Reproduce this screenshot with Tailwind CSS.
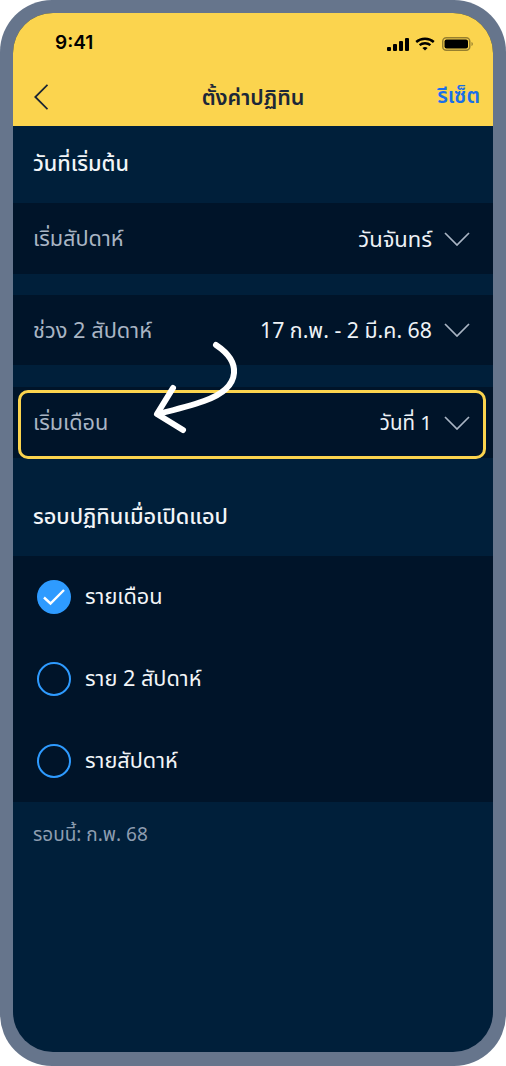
<!DOCTYPE html>
<html lang="th">
<head>
  <meta charset="UTF-8" />
  <meta name="viewport" content="width=device-width, initial-scale=1.0" />
  <title>ตั้งค่าปฏิทิน</title>
  <script src="https://cdn.jsdelivr.net/npm/@tailwindcss/browser@4"></script>
</head>
<body class="bg-white font-['Noto_Sans','Noto_Sans_Thai','DejaVu_Sans',sans-serif]">
  <!-- phone frame -->
  <div class="relative w-[506px] h-[1066px] bg-[#66758c] rounded-[52px] p-[13px] pb-[14px]">
    <div class="h-full rounded-[40px] overflow-hidden bg-[#001f3a] flex flex-col">

      <!-- yellow header -->
      <div class="h-[113px] bg-[#fbd44e] shrink-0 flex flex-col">
        <div class="h-[59px] flex items-end justify-between pl-[42px] pr-[20px] pb-[18px]">
          <span class="font-['Inter',sans-serif] text-[19px] leading-[22px] font-semibold text-black">9:41</span>
          <div class="flex items-center gap-[6px] mb-[3px]">
            <svg width="22" height="13" viewBox="0 0 22 13" fill="#000"><rect x="0" y="9" width="4" height="4" rx="1"/><rect x="6" y="6" width="4" height="7" rx="1"/><rect x="12" y="3" width="4" height="10" rx="1"/><rect x="18" y="0" width="4" height="13" rx="1"/></svg>
            <svg width="20" height="14" viewBox="0 0 20 14" fill="none" stroke="#000" stroke-width="2.4"><path d="M1.2 5C6 .6 14 .6 18.8 5"/><path d="M4.6 8.2c3-2.6 7.8-2.6 10.8 0"/><path d="M10 13.6 7.4 11c1.5-1.2 3.7-1.2 5.2 0z" fill="#000" stroke="none"/></svg>
            <svg width="31" height="14" viewBox="0 0 31 14" class="ml-[1px]"><rect x="0.75" y="0.75" width="27" height="12.5" rx="3.5" fill="none" stroke="#000" stroke-opacity="0.4" stroke-width="1.5"/><rect x="2.5" y="2.5" width="23.5" height="9" rx="2" fill="#000"/><path d="M29.5 5v4c.8-.3 1.3-1.1 1.3-2s-.5-1.700-1.300-2z" fill="#000" fill-opacity="0.4"/></svg>
          </div>
        </div>
        <div class="relative flex-1 flex items-center justify-center pb-[5px]">
          <svg class="absolute left-[21px] top-[12px]" width="14" height="26" viewBox="0 0 14 26" fill="none" stroke="#1a2433" stroke-width="1.8"><path d="M13.500 .8 1.300 13l12.200 12.200"/></svg>
          <span class="text-[21.5px] leading-[30px] font-semibold text-[#1c2738]">ตั้งค่าปฏิทิน</span>
          <span class="absolute right-[13px] top-[8px] text-[21px] leading-[30px] font-semibold text-[#1a6fe8]">รีเซ็ต</span>
        </div>
      </div>

      <!-- วันที่เริ่มต้น -->
      <div class="h-[77px] shrink-0 flex items-center pl-[20px] pb-[3px]">
        <span class="text-[21.7px] leading-[30px] font-medium text-[#f2f5f8]">วันที่เริ่มต้น</span>
      </div>

      <div class="h-[71px] shrink-0 bg-[#001429] flex items-center justify-between pl-[20px] pr-[23px]">
        <span class="text-[21.7px] leading-[30px] pb-[2px] text-[#a9b5c4]">เริ่มสัปดาห์</span>
        <div class="flex items-center gap-[12px]">
          <span class="text-[22px] leading-[30px] pb-[2px] text-[#eef2f6]">วันจันทร์</span>
          <svg width="26" height="14" viewBox="0 0 26 14" fill="none" stroke="#a9b5c4" stroke-width="1.700"><path d="M1 1l12 12L25 1"/></svg>
        </div>
      </div>

      <div class="h-[21px] shrink-0"></div>

      <div class="h-[70px] shrink-0 bg-[#001429] flex items-center justify-between pl-[20px] pr-[23px]">
        <span class="text-[21.8px] leading-[30px] text-[#a9b5c4]">ช่วง 2 สัปดาห์</span>
        <div class="flex items-center gap-[12px]">
          <span class="text-[21.3px] leading-[30px] text-[#eef2f6]">17 ก.พ. - 2 มี.ค. 68</span>
          <svg width="26" height="14" viewBox="0 0 26 14" fill="none" stroke="#a9b5c4" stroke-width="1.700"><path d="M1 1l12 12L25 1"/></svg>
        </div>
      </div>

      <div class="h-[22px] shrink-0"></div>

      <div class="h-[71px] shrink-0 bg-[#001429] flex items-center justify-between pl-[20px] pr-[23px]">
        <span class="text-[21.7px] leading-[30px] pb-[2px] text-[#a9b5c4]">เริ่มเดือน</span>
        <div class="flex items-center gap-[12px]">
          <span class="text-[20.5px] leading-[30px] pb-[2px] text-[#eef2f6]">วันที่ 1</span>
          <svg width="26" height="14" viewBox="0 0 26 14" fill="none" stroke="#a9b5c4" stroke-width="1.700"><path d="M1 1l12 12L25 1"/></svg>
        </div>
      </div>

      <!-- รอบปฏิทินเมื่อเปิดแอป -->
      <div class="h-[98px] shrink-0 flex items-center pl-[20px] pt-[18px]">
        <span class="text-[21.7px] leading-[30px] font-medium text-[#f2f5f8]">รอบปฏิทินเมื่อเปิดแอป</span>
      </div>

      <div class="h-[246px] shrink-0 bg-[#001429] flex flex-col">
        <div class="h-[82px] flex items-center gap-[14px] pl-[24px]">
          <svg width="34" height="34" viewBox="0 0 34 34"><circle cx="17" cy="17" r="17" fill="#2e9bff"/><path d="M7 17.500l6.500 6L27 10" fill="none" stroke="#fff" stroke-width="2.400"/></svg>
          <span class="text-[21.7px] leading-[30px] pb-[3px] text-[#f2f5f8]">รายเดือน</span>
        </div>
        <div class="h-[82px] flex items-center gap-[14px] pl-[24px]">
          <div class="w-[34px] h-[34px] rounded-full border-[2.5px] border-[#2e9bff]"></div>
          <span class="text-[21.7px] leading-[30px] pb-[3px] text-[#f2f5f8]">ราย 2 สัปดาห์</span>
        </div>
        <div class="h-[82px] flex items-center gap-[14px] pl-[24px]">
          <div class="w-[34px] h-[34px] rounded-full border-[2.5px] border-[#2e9bff]"></div>
          <span class="text-[21.7px] leading-[30px] pb-[3px] text-[#f2f5f8]">รายสัปดาห์</span>
        </div>
      </div>

      <div class="pl-[20px] pt-[18px]">
        <span class="text-[19px] leading-[28px] text-[#8d9db0]">รอบนี้: ก.พ. 68</span>
      </div>
    </div>

    <!-- highlight over the third row -->
    <div class="absolute left-[18px] top-[390px] w-[468px] h-[69px] rounded-[10px] border-[3.5px] border-[#fbd44e]"></div>

    <!-- hand drawn arrow -->
    <svg class="absolute left-0 top-0 pointer-events-none" width="506" height="1066" fill="none" stroke="#fff" stroke-width="6" stroke-linecap="round" stroke-linejoin="round">
      <path d="M216 345c12 8 19 17 18 28-1 13-13 22-30 28-14 5-30 9-46 13"/>
      <path d="M173 388l-16 26 26 16"/>
    </svg>
  </div>
</body>
</html>
